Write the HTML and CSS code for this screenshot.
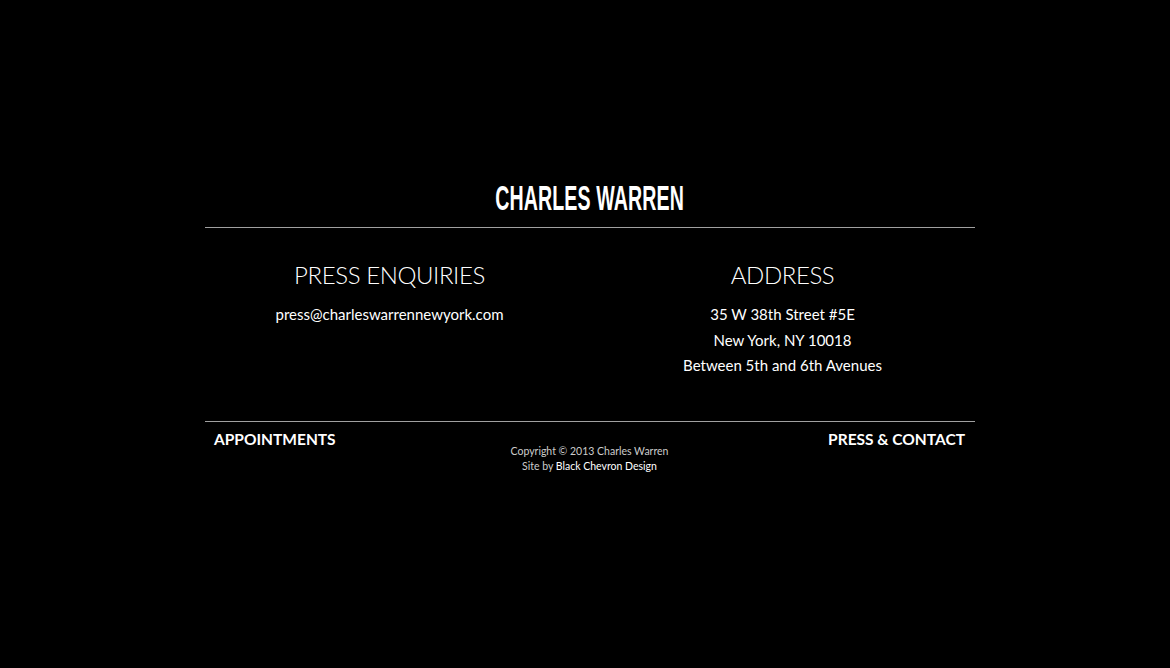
FILE: index.html
```html
<!DOCTYPE html>
<html>
<head>
<meta charset="utf-8">
<link rel="stylesheet" href="styles.css">
</head>
<body>
<div class="page">
  <header class="brand"><span class="brand-text">CHARLES WARREN</span></header>
  <section class="contact">
    <div class="col col-left">
      <h2>PRESS ENQUIRIES</h2>
      <p>press@charleswarrennewyork.com</p>
    </div>
    <div class="col col-right">
      <h2>ADDRESS</h2>
      <p>35 W 38th Street #5E<br>New York, NY 10018<br>Between 5th and 6th Avenues</p>
    </div>
  </section>
  <footer class="foot">
    <a class="nav nav-left">APPOINTMENTS</a>
    <div class="copy">Copyright © 2013 Charles Warren<br>Site by <span class="credit">Black Chevron Design</span></div>
    <a class="nav nav-right">PRESS &amp; CONTACT</a>
  </footer>
</div>
</body>
</html>
```

FILE: styles.css
```css
html, body { margin: 0; padding: 0; background: #000; }
body { color: #fff; font-family: Lato, "Liberation Sans", sans-serif; padding-left: 10px; }
.page { width: 770px; margin: 0 auto; padding-top: 178px; }
.brand {
  font-family: "Liberation Sans", sans-serif;
  font-weight: bold;
  font-size: 35px;
  line-height: 40px;
  text-align: center;
  padding-bottom: 9px;
  border-bottom: 1px solid #a0a0a0;
}
.brand-text { display: inline-block; transform: scaleX(0.56); letter-spacing: 0.2px; }
.contact { display: grid; grid-template-columns: 1fr 1fr; padding: 32px 0 42px; }
.col { text-align: center; }
.col-left { padding-right: 16px; }
.col h2 { margin: 0 0 12px; font-weight: 300; font-size: 24px; line-height: 30px; letter-spacing: -0.4px; }
.col p { margin: 0; font-size: 15px; line-height: 25.5px; }
.foot {
  border-top: 1px solid #a0a0a0;
  display: grid; grid-template-columns: 1fr auto 1fr; align-items: start;
  padding: 7px 10px 0 9px;
}
.nav { font-weight: bold; font-size: 15.5px; line-height: 20px; color: #fff; }
.nav-right { text-align: right; }
.copy { font-size: 10.5px; line-height: 15px; color: #ccc; text-align: center; padding-top: 15px; }
.credit { color: #fff; }
```
